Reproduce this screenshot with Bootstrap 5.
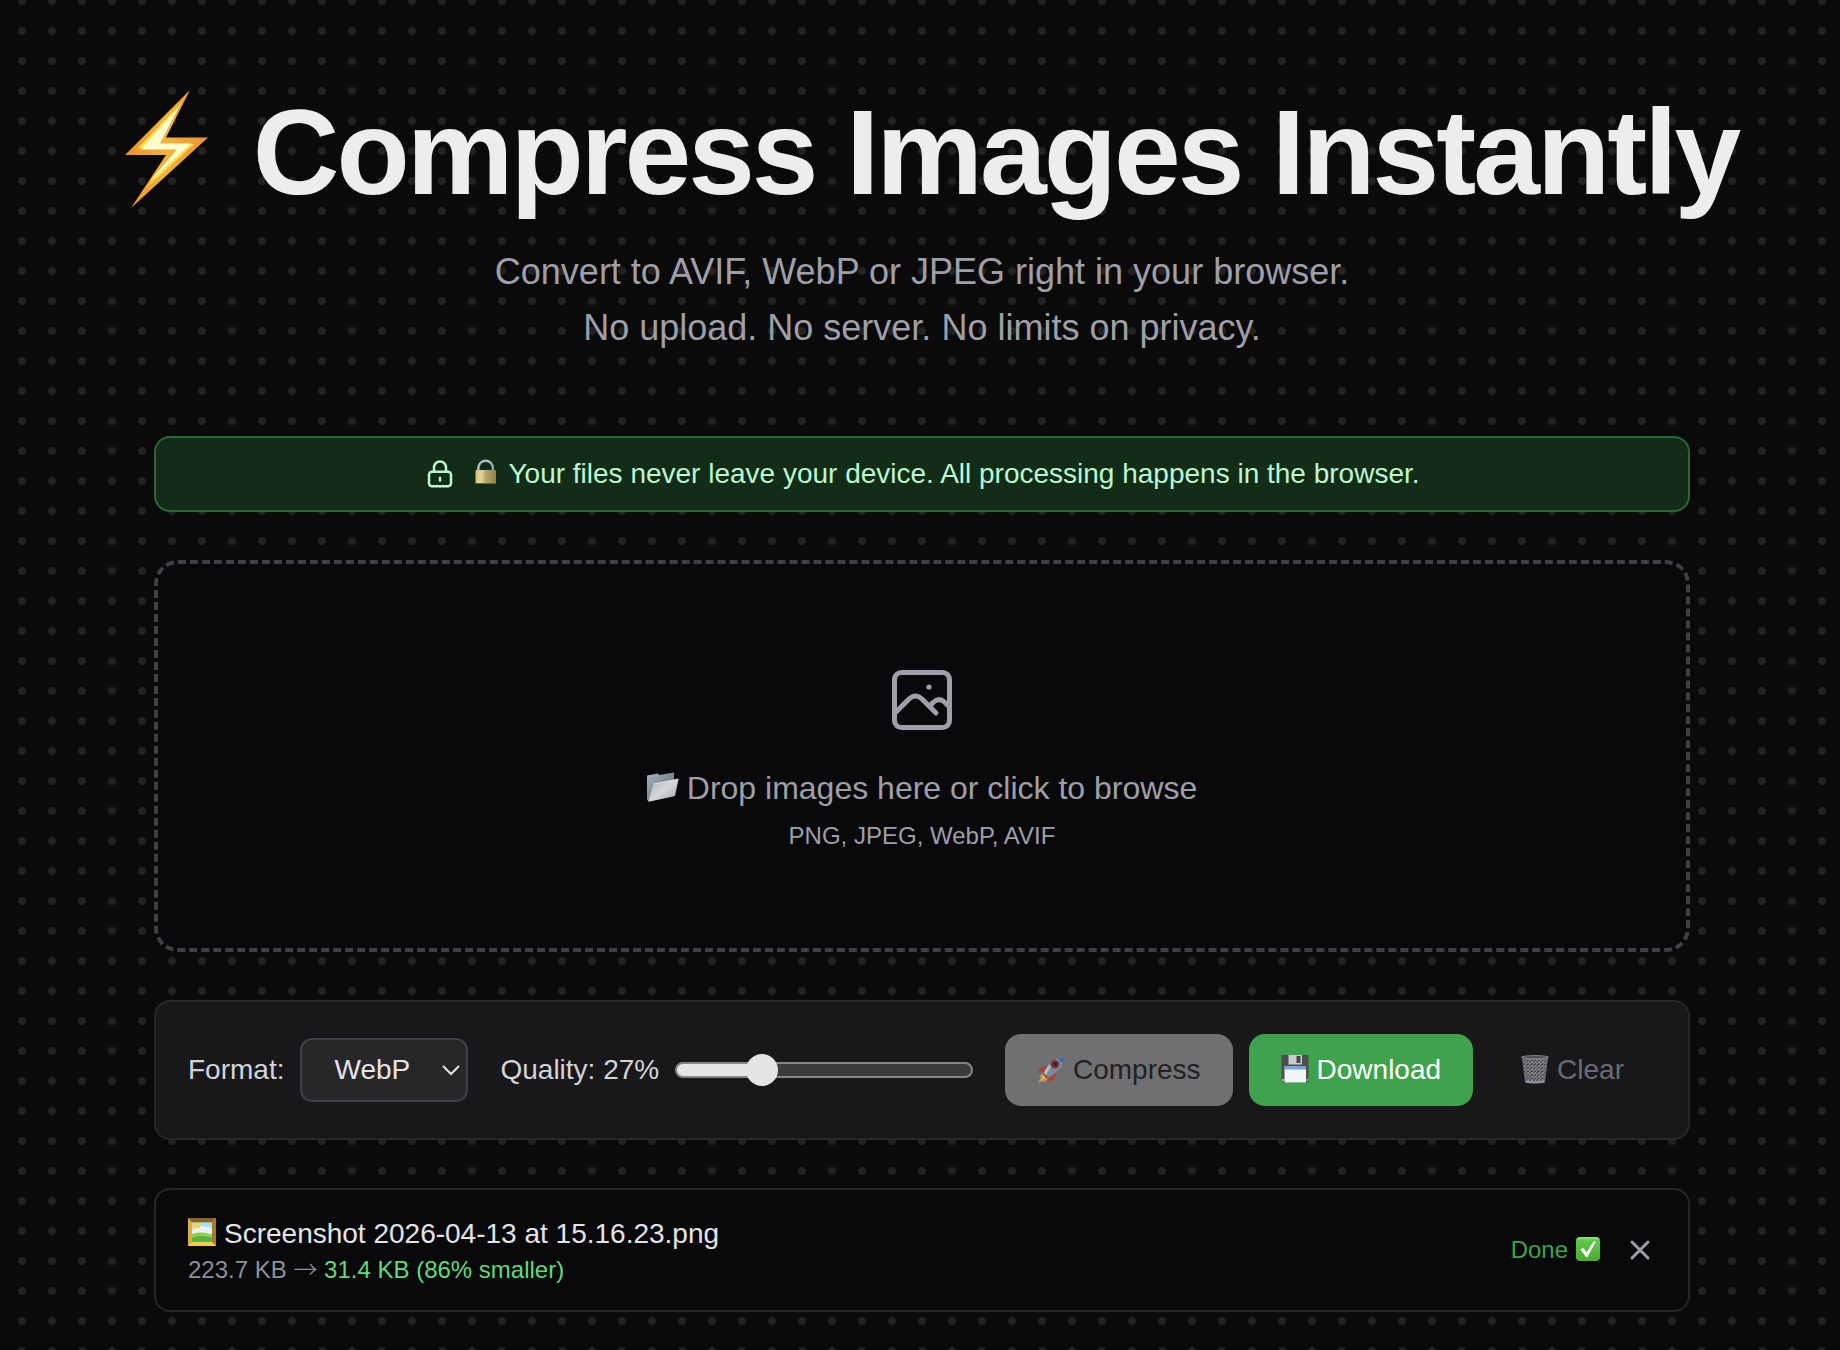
<!DOCTYPE html>
<html lang="en">
<head>
<meta charset="utf-8">
<meta name="viewport" content="width=device-width, initial-scale=1">
<title>Compress Images Instantly</title>
<link href="https://cdn.jsdelivr.net/npm/bootstrap@5.3.0/dist/css/bootstrap.min.css" rel="stylesheet">
<style>
  body {
    font-family: "Liberation Sans", Arial, sans-serif;
    font-size: 28px;
    line-height: 40px;
    color: #d4d4d8;
    background: #0a0a0a radial-gradient(circle at center, #222 3px, #222 3.6px, transparent 4.4px) 7px -14px / 30px 30px;
    min-height: 100vh;
  }
  .page { padding-top: 92px; padding-bottom: 32px; }
  .hero { gap: 32px; margin-bottom: 80px; }
  .hero-title {
    gap: 30px;
    font-size: 120px;
    line-height: 120px;
    font-weight: 700;
    letter-spacing: -0.025em;
    color: #ededed;
  }
  .bolt { width: 117px; height: 120px; overflow: visible; flex: none; }
  .hero-text { font-size: 36px; line-height: 56px; color: #9f9fa9; }
  .stack { max-width: 1536px; gap: 48px; }
  .notice {
    gap: 16px; padding: 16px 32px;
    border: 2px solid #2c6637; border-radius: 16px;
    background: #132c18; color: #bbf7d0;
  }
  .glyph { width: 28px; height: 28px; flex: none; overflow: visible; }
  .glyph-sm { width: 24px; height: 24px; flex: none; overflow: visible; }
  .glyph-lg { width: 32px; height: 32px; flex: none; overflow: visible; }
  .tight { gap: 8px; }
  .dropzone {
    padding: 96px 32px;
    border: 4px dashed #3f3f46; border-radius: 24px;
    background: #09090b; color: #9f9fa9; cursor: pointer;
  }
  .drop-title { font-size: 32px; line-height: 48px; margin: 24px 0 8px; }
  .small-text { font-size: 24px; line-height: 32px; }
  .controls {
    gap: 32px; padding: 32px;
    border: 2px solid #27272a; border-radius: 16px; background: #18181b;
  }
  .pair { gap: 16px; }
  .format-select {
    width: 168px; height: 64px; padding: 0 32px;
    font-size: 28px; line-height: 40px; color: #e4e4e7;
    background: #27272a url("data:image/svg+xml,%3Csvg xmlns='http://www.w3.org/2000/svg' viewBox='0 0 18 11'%3E%3Cpath d='M1 1l8 8 8-8' fill='none' stroke='%23e4e4e7' stroke-width='2'/%3E%3C/svg%3E") no-repeat right 6px center / 18px 11px;
    border: 2px solid #3f3f46; border-radius: 12px;
  }
  .quality-range { appearance: none; background: none; height: 32px; min-width: 160px; width: 100%; margin: 0; }
  .quality-range::-webkit-slider-runnable-track {
    height: 16px; border: 2px solid #858585; border-radius: 8px;
    background: linear-gradient(to right, #e4e4e7 28%, #3b3b3b 28%);
  }
  .quality-range::-webkit-slider-thumb {
    appearance: none; width: 32px; height: 32px; margin-top: -10px;
    border-radius: 50%; background: #e4e4e7;
  }
  .action {
    gap: 8px; padding: 16px 32px; border: 0; border-radius: 16px;
    font-size: 28px; line-height: 40px;
  }
  .action-compress, .action-compress:disabled { background: #707072; color: #212124; opacity: 1; }
  .action-compress .glyph { opacity: .7; }
  .action-download, .action-download:hover { background: #3fa34d; color: #fff; }
  .action-clear, .action-clear:hover { color: #6b6b75; }
  .action-clear .glyph { opacity: .8; }
  .file-item {
    gap: 24px; padding: 24px 32px;
    border: 2px solid #27272a; border-radius: 16px; background: #09090b;
  }
  .file-name { color: #e4e4e7; }
  .file-size { color: #8f8f98; }
  .arrow { font-family: "Noto Sans CJK JP", sans-serif; font-weight: 300; line-height: 1; }
  .saved { color: #5fdb7d; }
  .done { color: #3fa34d; }
  .remove { color: #9f9fa9; line-height: 0; }
  @media (max-width: 1650px) { .hero-title { font-size: 7vw; line-height: 1; gap: 2vw; } .bolt { width: 7vw; height: 7vw; } }
</style>
</head>
<body>
<main class="page container-fluid ps-1 pe-0">
  <header class="hero d-flex flex-column align-items-center text-center">
    <h1 class="hero-title d-flex align-items-center justify-content-center m-0">
      <svg class="bolt" viewBox="0 2 117 120" aria-hidden="true">
        <defs>
          <linearGradient id="boltEdge" x1="0" y1="0" x2="1" y2="0"><stop offset="0" stop-color="#f0912f"/><stop offset=".5" stop-color="#f3b23c"/><stop offset="1" stop-color="#ee9232"/></linearGradient>
        </defs>
        <path d="M84 0 60 47.500H102L25 118 60 65H19Z" fill="url(#boltEdge)"/>
        <path d="M76 12 51 54H88L40 98 72 58H32Z" fill="#fbe24c"/>
        <path d="M73 17 54 53.500H85L43 92 71 59.500H35Z" fill="#fffdd0"/>
      </svg>
      <span>Compress Images Instantly</span>
    </h1>
    <p class="hero-text m-0">Convert to AVIF, WebP or JPEG right in your browser.<br>No upload. No server. No limits on privacy.</p>
  </header>

  <div class="stack d-flex flex-column mx-auto">
    <div class="notice d-flex align-items-center justify-content-center">
      <svg class="glyph-lg" viewBox="0 0 32 32" fill="none" stroke="currentColor" stroke-width="2.5" stroke-linecap="round" aria-hidden="true">
        <rect x="5" y="13.700" width="22" height="14.500" rx="3"/><path d="M10 13.700V9.500a6 6 0 0 1 12 0v4.200M16 19.800v2.800"/>
      </svg>
      <span class="d-flex align-items-center tight">
        <svg class="glyph" viewBox="0 0 28 28" aria-hidden="true">
          <defs><linearGradient id="brass"><stop offset="0" stop-color="#d3c27a"/><stop offset=".3" stop-color="#e0d69b"/><stop offset=".5" stop-color="#b5a764"/><stop offset="1" stop-color="#8f834a"/></linearGradient></defs>
          <path d="M6.500 12V8a7.200 7.200 0 0 1 14.400 0v4" fill="none" stroke="#9aa3b3" stroke-width="2.400"/>
          <path d="M6 12V7.800a7.600 7.600 0 0 1 13-5" fill="none" stroke="#d5dbe6" stroke-width=".8"/>
          <rect x="3.500" y="10" width="20.500" height="14" rx="1" fill="url(#brass)"/>
          <path d="M4 23.500h19.500" stroke="#6b6136"/>
        </svg>
        <span>Your files never leave your device. All processing happens in the browser.</span>
      </span>
    </div>

    <div class="dropzone d-flex flex-column align-items-center text-center" role="button" tabindex="0">
      <svg width="80" height="80" viewBox="0 0 80 80" fill="none" stroke="currentColor" stroke-width="5" stroke-linecap="round" stroke-linejoin="round" aria-hidden="true">
        <rect x="12.500" y="12.500" width="55" height="55" rx="7"/>
        <path d="M13 53 27 39Q33.500 33 40 39L54 53"/>
        <path d="M48 46 51 42.500Q57 37 62.500 42L67 46.500"/>
        <circle cx="47" cy="27" r="2.600" fill="currentColor" stroke="none"/>
      </svg>
      <div class="drop-title d-flex align-items-center tight">
        <svg class="glyph-lg" viewBox="0 0 32 32" aria-hidden="true">
          <defs>
            <linearGradient id="folderBack" x1="0" y1="0" x2="1" y2="1"><stop offset="0" stop-color="#a9b4bd"/><stop offset="1" stop-color="#53616c"/></linearGradient>
            <linearGradient id="folderFront" x1="0" y1="0" x2="1" y2="1"><stop offset="0" stop-color="#aeb5bd"/><stop offset=".5" stop-color="#d3d6da"/><stop offset="1" stop-color="#9ca4ad"/></linearGradient>
          </defs>
          <path d="M0 3.500 11 1.500 12.500 3 27 .5V24L1.500 29.500 0 27.500Z" fill="url(#folderBack)"/>
          <path d="M6.500 12 31.500 7 28 24 1.500 29.800Z" fill="url(#folderFront)"/>
          <path d="M6.500 12 31.500 7" stroke="#eef0f2" stroke-width=".8"/>
        </svg>
        <span>Drop images here or click to browse</span>
      </div>
      <div class="small-text">PNG, JPEG, WebP, AVIF</div>
    </div>

    <form class="controls d-flex flex-wrap align-items-center">
      <div class="pair d-flex align-items-center">
        <label for="format">Format:</label>
        <select id="format" class="format-select form-select">
          <option>AVIF</option><option selected>WebP</option><option>JPEG</option>
        </select>
      </div>
      <div class="pair d-flex align-items-center flex-fill">
        <label for="quality" class="text-nowrap">Quality: 27%</label>
        <input id="quality" class="quality-range" type="range" min="1" max="100" value="27">
      </div>
      <div class="pair d-flex flex-wrap align-items-center">
        <button type="button" class="action action-compress btn d-flex align-items-center" disabled>
          <svg class="glyph" viewBox="0 0 28 28" aria-hidden="true">
            <path d="M10 9.500 4 11 .5 17l7-1zM18.500 17.500 18 23l-6 4-.5-7.500z" fill="#b9352a"/>
            <path d="M7 17 2 20.500 4.500 21 1 27l5.500-2.500.5 2.500 4.500-6z" fill="#ffb53a"/>
            <path d="M7 18.500 4 23.500 9.500 20.500z" fill="#fff0a0"/>
            <path d="M7 17Q11 4 27.500 .5 26 14 11.500 21.500Z" fill="#8094ac"/>
            <path d="M7 17Q11 7 22 2 13 10 9 19.500z" fill="#d4dde8"/>
            <path d="M20.500 2.500 27.500.5Q27.500 4 26 7.500Z" fill="#2f77b5"/>
            <circle cx="17.800" cy="8.200" r="4.600" fill="#a52d29"/><circle cx="18" cy="8" r="2.800" fill="#111519"/>
            <path d="m7 17 4.500 4.500-2 1L6 19z" fill="#c0392f"/>
          </svg>
          Compress
        </button>
        <button type="button" class="action action-download btn d-flex align-items-center">
          <svg class="glyph" viewBox="0 0 28 28" aria-hidden="true">
            <path d="M.5-1h27V26.500H2L.5 24.500Z" fill="#4c4e50"/>
            <rect x="7.500" y="-1" width="13.500" height="9.500" fill="#c9cbcd"/><rect x="15.500" y="0" width="4" height="7" fill="#46484a"/>
            <rect x="3.500" y="10.500" width="21.500" height="16" fill="#f4f5f6"/><rect x="3.500" y="10.500" width="21.500" height="3" fill="#73a7df"/>
            <path d="M1 24h2M25.500 24h1.500" stroke="#d8dadc" stroke-width="1.500"/>
          </svg>
          Download
        </button>
        <button type="button" class="action action-clear btn d-flex align-items-center">
          <svg class="glyph" viewBox="0 1 28 28" aria-hidden="true">
            <defs><pattern id="mesh" width="3.600" height="3.600" patternUnits="userSpaceOnUse"><path d="M0 0 3.600 3.600M3.600 0 0 3.600" stroke="#b6b8bd" stroke-width="1"/></pattern></defs>
            <path d="M1.500 3h25L23.500 27h-19z" fill="#33353a"/>
            <path d="M1.500 3h25L23.500 27h-19z" fill="url(#mesh)" stroke="#7b7f86"/>
            <ellipse cx="14" cy="2.200" rx="13.500" ry="1.500" fill="#4d5158" stroke="#a9adb4"/>
            <path d="M4.500 26.500Q14 28.500 23.500 26.500" fill="none" stroke="#a9b8c8" stroke-width="1.800"/>
          </svg>
          Clear
        </button>
      </div>
    </form>

    <div class="file-item d-flex align-items-center">
      <div class="flex-fill">
        <div class="file-name d-flex align-items-center tight">
          <svg class="glyph" viewBox="0 0 28 28" aria-hidden="true">
            <rect width="28" height="28" y="-2" fill="#d9ae3c"/><path d="M0-2h28l-4 4.500H4z" fill="#8a6420"/><path d="M28-2v28l-4-4V2z" fill="#a67c28"/><path d="M0 26h28l-4-4H4z" fill="#f0cd52"/>
            <rect x="4" y="2.500" width="20" height="19.500" fill="#a9def0"/>
            <circle cx="8" cy="6.500" r="3.500" fill="#f6d73c"/>
            <path d="M4 10Q7 7 11 8 14 4 18 7 21 6 24 9V15H4Z" fill="#e8f2f6"/>
            <path d="M4 14Q14 11 24 14.500V22H4Z" fill="#8fd053"/><path d="M4 18Q15 14 24 18V22H4Z" fill="#57b33b"/>
          </svg>
          <span>Screenshot 2026-04-13 at 15.16.23.png</span>
        </div>
        <div class="file-size small-text">223.7 KB <span class="arrow">→</span> <span class="saved">31.4 KB (86% smaller)</span></div>
      </div>
      <div class="done small-text d-flex align-items-center tight">
        Done
        <svg class="glyph-sm" viewBox="0 1 24 24" aria-hidden="true">
          <defs><linearGradient id="tick" x2="0" y2="1"><stop offset="0" stop-color="#9be584"/><stop offset=".15" stop-color="#5ec648"/><stop offset="1" stop-color="#4bae33"/></linearGradient></defs>
          <rect width="24" height="24" rx="4" fill="url(#tick)"/>
          <path d="M4.500 12.500 7.500 10.500 10.500 15.500 17.500 4.500H20L11.500 20H10Z" fill="#fff"/>
        </svg>
      </div>
      <button type="button" class="remove btn border-0 p-0" aria-label="Remove file">
        <svg class="glyph-lg" viewBox="0 0 32 32" fill="none" stroke="currentColor" stroke-width="2.900" stroke-linecap="round"><path d="m8 8 16 16M24 8 8 24"/></svg>
      </button>
    </div>
  </div>
</main>
<script src="https://cdn.jsdelivr.net/npm/bootstrap@5.3.0/dist/js/bootstrap.bundle.min.js"></script>
</body>
</html>
